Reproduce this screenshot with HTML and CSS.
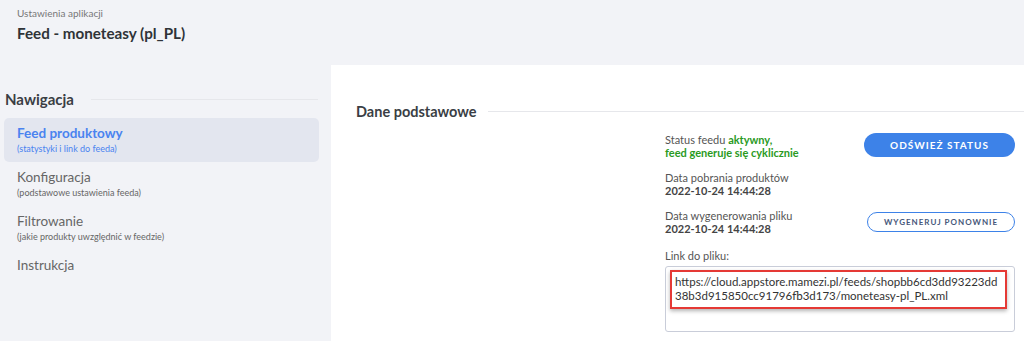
FILE: index.html
```html
<!doctype html>
<html>
  <head>
    <title>Feed - moneteasy</title>
    <link rel="stylesheet" href="styles.css">
  </head>
  <body>
    <div class='page-head'>
      <div class='crumb'>Ustawienia aplikacji</div>
      <h1 class='page-title'>Feed - moneteasy (pl_PL)</h1>
    </div>
    <div class='layout'>
      <div class='sidebar'>
        <div class='section-title'><span>Nawigacja</span><div class='rule'></div></div>
        <div class='nav-item active'>
          <div class='nav-name'>Feed produktowy</div>
          <div class='nav-sub'>(statystyki i link do feeda)</div>
        </div>
        <div class='nav-item'>
          <div class='nav-name'>Konfiguracja</div>
          <div class='nav-sub'>(podstawowe ustawienia feeda)</div>
        </div>
        <div class='nav-item'>
          <div class='nav-name'>Filtrowanie</div>
          <div class='nav-sub'>(jakie produkty uwzględnić w feedzie)</div>
        </div>
        <div class='nav-item'>
          <div class='nav-name'>Instrukcja</div>
        </div>
      </div>
      <div class='main'>
        <div class='section-title main-title'><span>Dane podstawowe</span><div class='rule'></div></div>
        <div class='details'>
          <div class='row'>
            <div class='info'>
              Status feedu <b class='ok'>aktywny,</b><br>
              <b class='ok'>feed generuje się cyklicznie</b>
            </div>
            <button class='btn btn-primary'>Odśwież status</button>
          </div>
          <div class='row'>
            <div class='info'>
              Data pobrania produktów<br>
              <b>2022-10-24 14:44:28</b>
            </div>
          </div>
          <div class='row'>
            <div class='info'>
              Data wygenerowania pliku<br>
              <b>2022-10-24 14:44:28</b>
            </div>
            <button class='btn btn-outline'>Wygeneruj ponownie</button>
          </div>
          <div class='link-label'>Link do pliku:</div>
          <div class='link-box'>
            <div class='link-mark'>https://cloud.appstore.mamezi.pl/feeds/shopbb6cd3dd93223dd38b3d915850cc91796fb3d173/moneteasy-pl_PL.xml</div>
          </div>
        </div>
      </div>
    </div>
  </body>
</html>
```

FILE: styles.css
```css
html, body {
  margin: 0;
  height: 100%;
}
body {
  background: #f2f3f7;
  font-family: Lato, "Noto Sans", sans-serif;
  color: #555;
  overflow: hidden;
}
/* header */
.page-head {
  padding: 7px 17px 0;
  height: 58px;
}
.crumb {
  font-size: 10px;
  color: #777;
}
.page-title {
  margin: 5px 0 0;
  font-size: 15.2px;
  font-weight: 700;
  color: #2f3338;
}
.layout {
  display: flex;
  height: 276px;
}
/* sidebar */
.sidebar {
  width: 315px;
  padding: 0 12px 0 4px;
}
.section-title {
  display: flex;
  align-items: center;
  gap: 8px;
  font-size: 15px;
  font-weight: 700;
  color: #3a3e44;
}
.section-title .rule {
  flex: 1;
  height: 1px;
  background: #e6e7eb;
}
.sidebar .section-title {
  margin: 25px 1px 10px;
}
.sidebar .rule {
  margin-left: 9px;
}
.nav-item {
  padding: 7px 13px 0;
  height: 37px;
  border-radius: 5px;
}
.nav-item.active {
  background: #e3e6ef;
}
.nav-name {
  font-size: 13.5px;
  color: #666;
}
.nav-sub {
  font-size: 9px;
  color: #666;
  margin-top: 2px;
}
.active .nav-name {
  font-weight: 700;
  color: #4a83ef;
}
.active .nav-sub {
  color: #4a83ef;
}
/* main panel */
.main {
  flex: 1;
  background: #fff;
  padding: 0 0 0 25px;
}
.main-title {
  margin: 38px 0 7px;
  font-size: 14.5px;
  gap: 12px;
}
.details {
  margin-left: 309px;
  width: 350px;
  font-size: 11px;
}
.row {
  display: flex;
  justify-content: space-between;
  align-items: center;
  height: 38px;
  line-height: 13px;
}
.info b {
  color: #444;
}
.info b.ok {
  color: #2a9a1e;
}
.btn {
  border-radius: 12px;
  text-transform: uppercase;
  font-family: Lato, sans-serif;
  font-weight: 700;
  letter-spacing: 1px;
  cursor: pointer;
}
.btn-primary {
  width: 151px;
  height: 24px;
  margin-top: -2px;
  background: #3d82e8;
  border: 0;
  color: #fff;
  font-size: 10px;
}
.btn-outline {
  width: 148px;
  height: 20px;
  background: #fff;
  border: 1.5px solid #3d82e8;
  color: #47577a;
  font-size: 8px;
}
.link-label {
  margin-top: 8px;
  font-size: 11px;
  color: #555;
}
.link-box {
  margin-top: 4px;
  height: 55px;
  border: 1px solid #c9cdd9;
  border-radius: 3px;
  padding: 3px 7px 6px 4px;
}
/* red annotation frame */
.link-mark {
  border: 2px solid #e53935;
  box-shadow: 0 2px 4px rgba(0,0,0,0.3);
  padding: 3px 3px 4px;
  font-size: 11.5px;
  line-height: 14px;
  color: #333;
  word-break: break-all;
}
```
